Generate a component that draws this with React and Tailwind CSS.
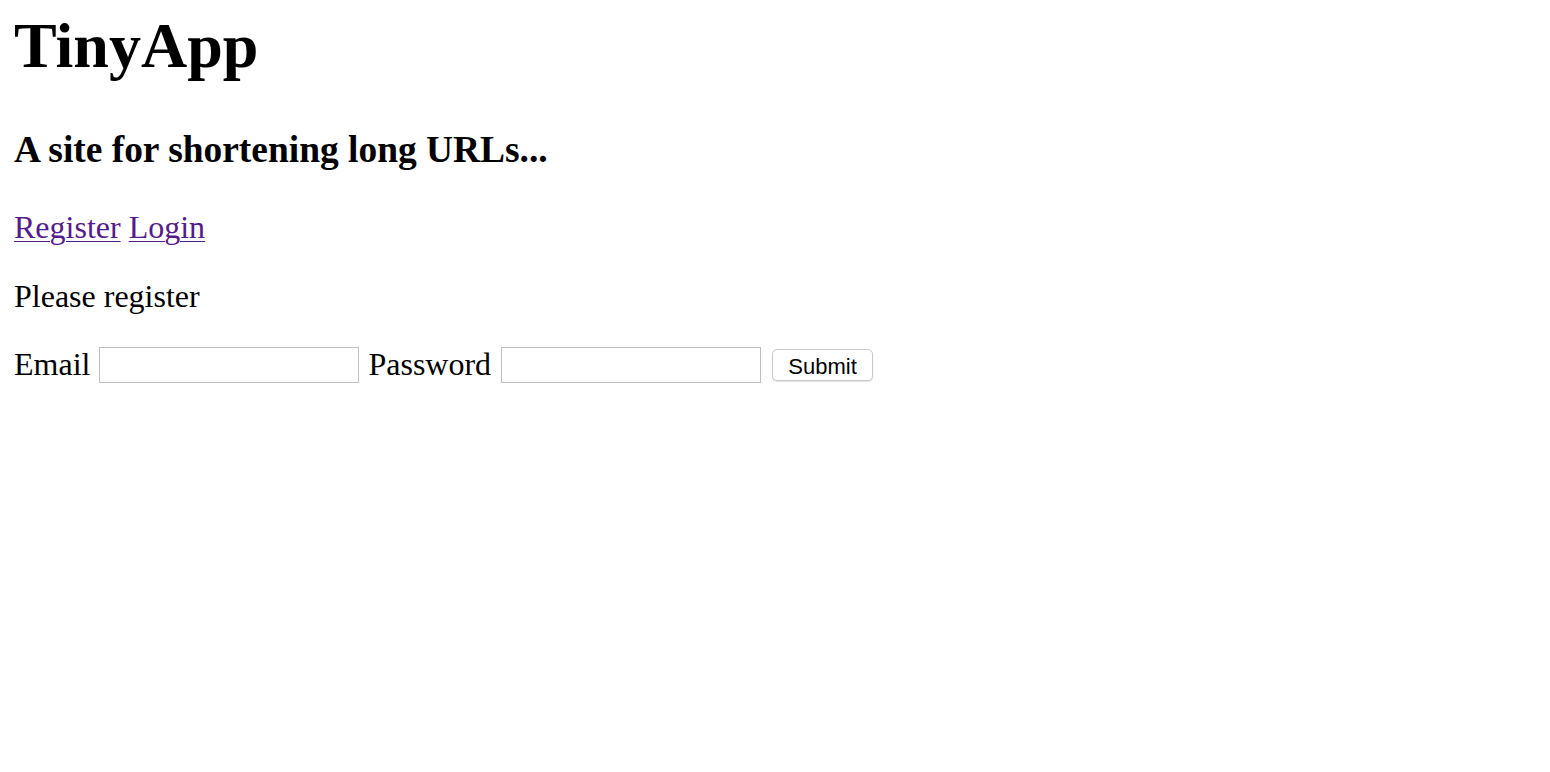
export default function App() {
  return (
    <div className="min-h-screen bg-white pl-[14px] pt-[9px] font-['Liberation_Serif','Times_New_Roman',serif] text-black">
      <h1 className="text-[64px] font-bold leading-[74px]">TinyApp</h1>
      <h3 className="mt-[45px] text-[37.44px] font-bold leading-[43px]">
        A site for shortening long URLs...
      </h3>
      <p className="mt-[38px] text-[32px] leading-[37px]">
        <a href="#" className="text-[#551a8b] underline decoration-1 underline-offset-[3px]">
          Register
        </a>{' '}
        <a href="#" className="text-[#551a8b] underline decoration-1 underline-offset-[3px]">
          Login
        </a>
      </p>
      <p className="mt-[32px] text-[32px] leading-[37px]">Please register</p>
      <form className="mt-[31px] flex h-[37px] items-center text-[32px] leading-[37px]">
        <label htmlFor="email">Email</label>
        <input
          id="email"
          type="text"
          className="ml-[9px] h-[36px] w-[260px] border border-[#c0c0c0] bg-white"
        />
        <label htmlFor="password" className="ml-[9px]">
          Password
        </label>
        <input
          id="password"
          type="password"
          className="ml-[10px] h-[36px] w-[260px] border border-[#c0c0c0] bg-white"
        />
        <button
          type="submit"
          className="ml-[11px] h-[32px] w-[101px] rounded-[5px] border border-[#c9c9c9] bg-white pt-[4px] font-['Liberation_Sans',Arial,sans-serif] text-[22px] leading-none text-black shadow-[0_1px_1px_rgba(0,0,0,0.12)]"
        >
          Submit
        </button>
      </form>
    </div>
  );
}
